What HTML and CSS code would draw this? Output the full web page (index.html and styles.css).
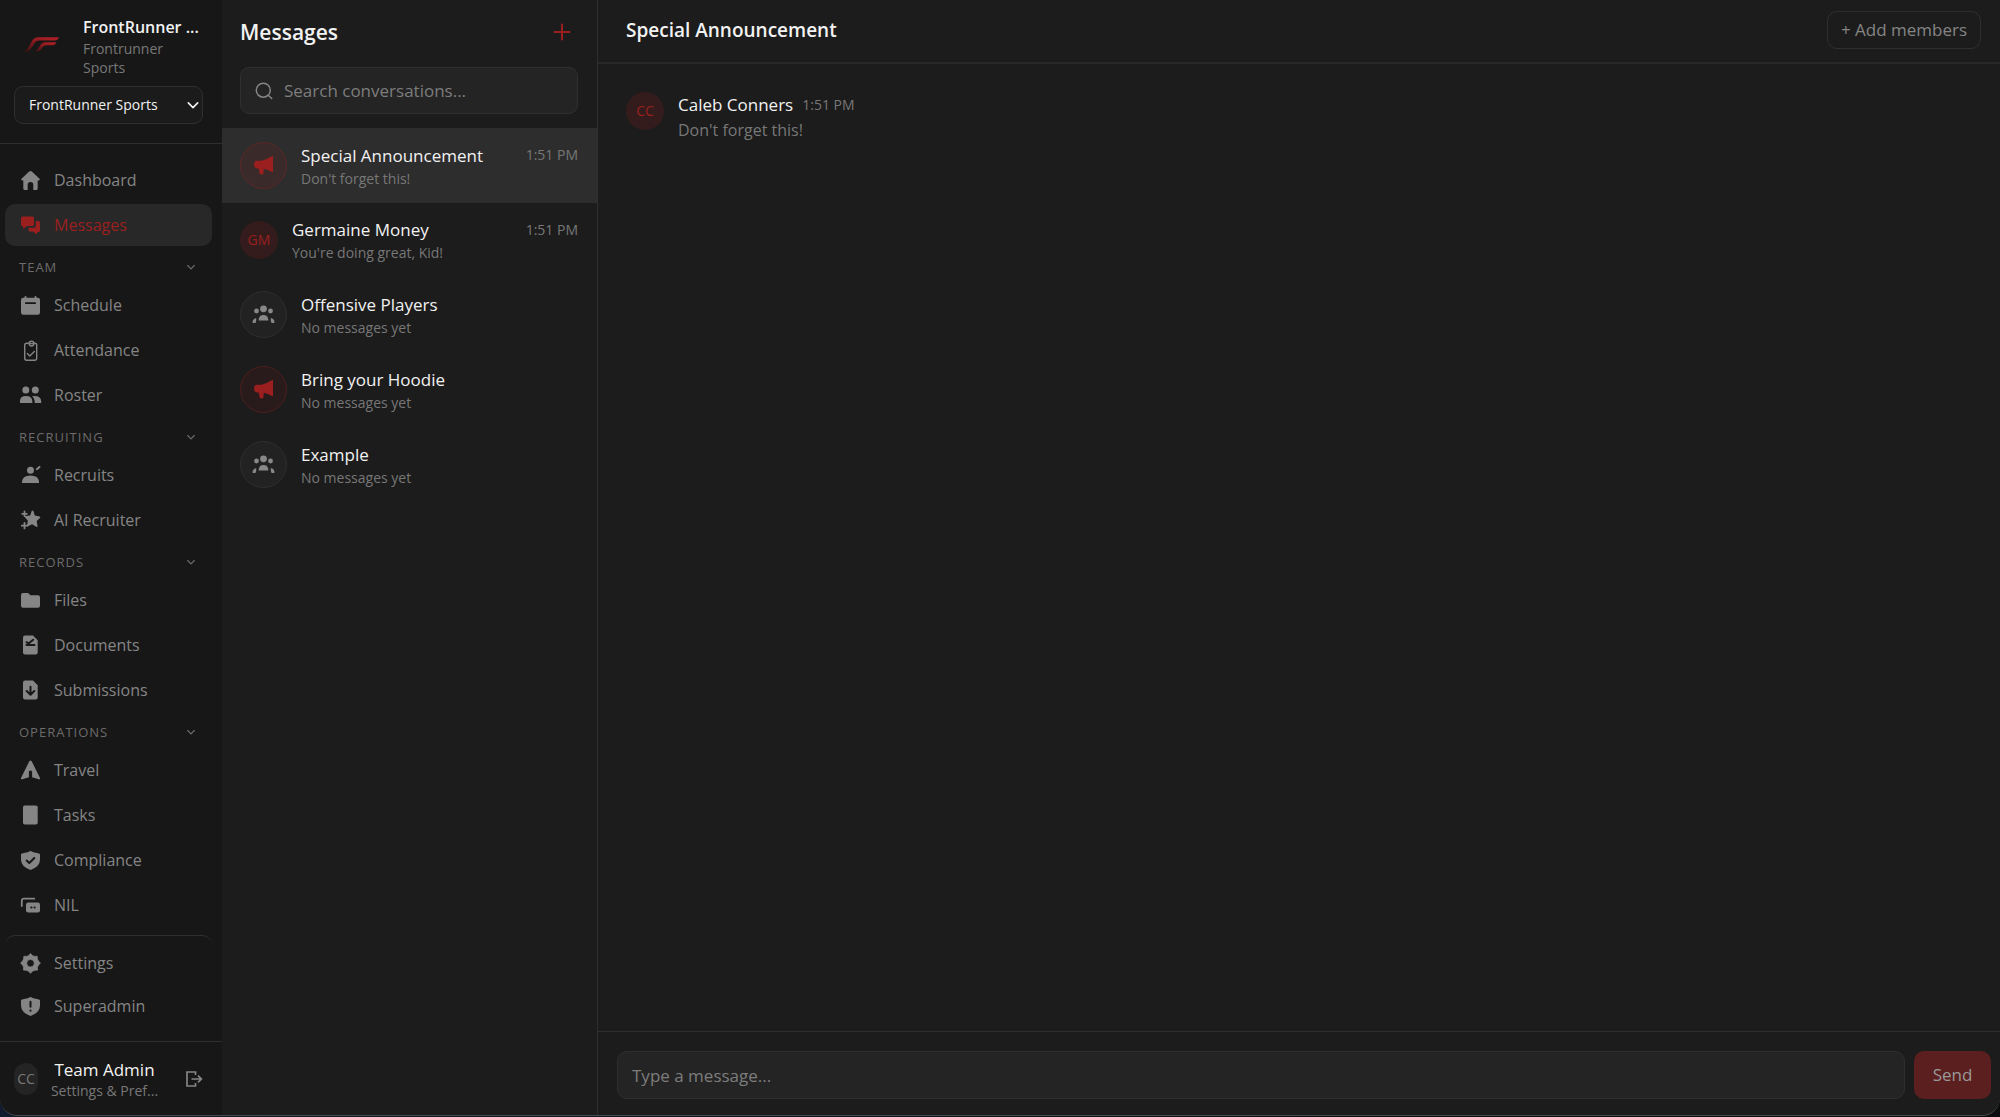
FILE: index.html
```html
<!DOCTYPE html>
<html lang="en">
<head>
<meta charset="utf-8">
<meta name="viewport" content="width=device-width, initial-scale=1">
<title>Messages – FrontRunner Sports</title>
<link rel="stylesheet" href="styles.css">
</head>
<body>
<svg class="sprite" aria-hidden="true">
  <symbol id="home" viewBox="0 0 23 23"><path d="M10.2 2.6 2.7 9.4q-1.4 1.9 1 2H4.3v8.1q0 1.5 1.6 1.5h2.8v-5.2a2.8 2.8 0 0 1 5.6 0V21h2.8q1.6 0 1.6-1.5v-8.1h.6q2.4-.1 1-2l-7.5-6.8q-1.3-1-2.6 0z"/></symbol>
  <symbol id="chat" viewBox="0 0 23 23"><path d="M3.500 2.500H13.500q1.500 0 1.500 1.500v6.500q0 1.500-1.500 1.500H8l-3 2.500q-1 .5-1-.5v-2h-.5Q2 12 2 10.500V4q0-1.500 1.500-1.500z"/><path d="M16.800 7h2.700Q21 7 21 8.500v8q0 1.500-1.500 1.500H18v1.500q0 1-1 .5L14 17.500h-3q-1.500 0-1.500-1.500v-2.300h4.800q2.500 0 2.500-2.500z"/></symbol>
  <symbol id="calendar" viewBox="0 0 23 23"><path fill-rule="evenodd" d="M5.500 3q0-1 1-1t1 1v.8h8V3q0-1 1-1t1 1v.8h1.300Q21 3.800 21 6v12.500q0 2.200-2.200 2.200H4.200Q2 20.700 2 18.500V6q0-2.200 2.200-2.200h1.300zM6.800 8.200a.9.9 0 0 0 0 1.800h9.400a.9.9 0 0 0 0-1.800z"/></symbol>
  <symbol id="clipboard" viewBox="0 0 23 23"><g fill="none" stroke="currentColor" stroke-width="1.400" stroke-linecap="round" stroke-linejoin="round"><path d="M9.500 4.300H7.700q-2 0-2 2v12.900q0 2 2 2h8q2 0 2-2V6.300q0-2-1.800-2h-.5"/><circle cx="12.500" cy="4.600" r="2.400"/><path d="M8.300 14.500l2.500 2.500 4.500-4.500M11.500 4.600h2"/></g></symbol>
  <symbol id="people" viewBox="0 0 23 23"><circle cx="6.800" cy="6" r="3.500"/><circle cx="16.300" cy="6" r="3.500"/><path d="M1 19v-2q0-5 6-5t6.300 5v2zM13 12.200q8.500-1.200 9.200 4.800v2h-6.500v-2q0-3-2.700-4.800z"/></symbol>
  <symbol id="recruit" viewBox="0 0 23 23"><circle cx="11.500" cy="6.200" r="3.500"/><path d="M3 19v-1.500Q3.500 11.500 11.500 11.500T20 17.500V19z"/><path d="M17.800 5.200l2.700-2.300" stroke="currentColor" stroke-width="2" stroke-linecap="round"/></symbol>
  <symbol id="stars" viewBox="0 0 23 23"><path d="M13.500 1.500q.8 0 1 .8l1.300 4.200 4.800.9q1.400.5.4 1.500l-3.300 3.100.8 5q0 1.400-1.200.8l-4.300-2.500-4 2q-1.300.4-1-.9l.9-4.600L6 8.500q-.8-1.100.5-1.500l4.700-.5 1.400-4.200q.2-.8.900-.8z"/><path d="M5.500 2.500v4.600M3.200 4.800h4.600M5.500 14v5.400M2.800 16.700h5.400" stroke="currentColor" stroke-width="1.800" stroke-linecap="round"/></symbol>
  <symbol id="folder" viewBox="0 0 23 23"><path d="M4 4h5l2.500 2.200H19q2 0 2 2v8.600q0 2-2 2H4q-2 0-2-2V6q0-2 2-2z"/></symbol>
  <symbol id="doccheck" viewBox="0 0 23 23"><path d="M6 1.500h8l4.700 4.700v12.300q0 2-2 2H6q-2 0-2-2v-15q0-2 2-2z"/><path d="M7.500 8.200l2 1.300 4.700-3.800M7.500 11h8" class="cut"/></symbol>
  <symbol id="docdown" viewBox="0 0 23 23"><path d="M6 1.500h8l4.700 4.700v12.300q0 2-2 2H6q-2 0-2-2v-15q0-2 2-2z"/><path d="M11.500 7.800v8M7.700 12l3.800 3.900 3.800-3.900" class="cut"/></symbol>
  <symbol id="travel" viewBox="0 0 23 23"><path d="M10.300 2.300q1.200-1.600 2.400 0L21 19q.4 1.700-1.300 1.300l-6.600-2.100V12.500q-1.600-2-3.200 0v5.700l-6.600 2.100Q1.600 20.700 2 19z"/></symbol>
  <symbol id="sheet" viewBox="0 0 23 23"><rect x="4" y="1.500" width="14.700" height="19" rx="1.800"/></symbol>
  <symbol id="shieldcheck" viewBox="0 0 23 23"><path d="M11.500 1.800q1.500 1.700 8.500 2.600 1 .2 1 1.200v4.900q0 7-9.500 10.500Q2 17.500 2 10.500V5.600q0-1 1-1.200 7-.9 8.500-2.600z"/><path d="M7.700 11.500l2.600 2.500 5-5" class="cut"/></symbol>
  <symbol id="cards" viewBox="0 0 23 23"><path d="M2.800 12V6.700q0-2 2-2h10.500" fill="none" stroke="currentColor" stroke-width="1.800" stroke-linecap="round"/><rect x="7" y="8.500" width="14" height="10" rx="2.200"/><path d="M12.300 13.500h.2M15.500 13.500h.2" class="cut"/></symbol>
  <symbol id="gear" viewBox="0 0 23 23"><path fill-rule="evenodd" d="M9.700 3.600 11.500 1.500l1.800 2.100 2.100.8 2.700-.2.300 2.800 1 2 2 2-2 2.200-1 2 .1 2.900-2.900.2-2.200.9-1.900 2.100-1.900-2.100-2.200-.9-2.900-.2.100-2.900-1-2-2-2.200 2-2 1-2 .3-2.800 2.700.2zM11.500 7.400a3.800 3.800 0 1 0 0 7.600 3.800 3.800 0 0 0 0-7.600z" stroke="currentColor" stroke-linejoin="round" stroke-width=".8"/></symbol>
  <symbol id="shieldalert" viewBox="0 0 23 23"><path d="M11.500 1.800q1.500 1.700 8.500 2.600 1 .2 1 1.200v4.900q0 7-9.500 10.500Q2 17.500 2 10.500V5.600q0-1 1-1.200 7-.9 8.500-2.600z"/><path d="M11.500 6.800v5M11.500 15.400v.3" class="cut"/></symbol>
  <symbol id="chevron" viewBox="0 0 12 12"><path d="M2 4.200 6 8.200l4-4" fill="none" stroke="currentColor" stroke-width="1.400" stroke-linecap="round" stroke-linejoin="round"/></symbol>
  <symbol id="logout" viewBox="0 0 18 18"><path d="M10.500 5V2H2v14h8.500v-3M6.500 9H16M13 5.700 16.400 9 13 12.300" fill="none" stroke="currentColor" stroke-width="1.700"/></symbol>
  <symbol id="search" viewBox="0 0 18 18"><g fill="none" stroke="currentColor" stroke-width="1.500" stroke-linecap="round"><circle cx="8.300" cy="8.200" r="7"/><path d="M13.500 13.500l3.200 3"/></g></symbol>
  <symbol id="plus" viewBox="0 0 18 18"><path d="M9 1.500v15M1.500 9h15" stroke="currentColor" stroke-width="2" stroke-linecap="round"/></symbol>
  <symbol id="megaphone" viewBox="0 0 23 23"><path d="M2 9.600Q2.300 6.800 5 6.800h4.500Q14.500 5.500 19.800 2.200q1.200-.6 1.200.6v14.700q0 1.200-1.200.5-3.800-2.300-8-3.300l-.3 4.500q-.2 1.300-1.500 1.300H9.200q-1.300 0-1.600-1.300l-1-4.600q-3.600.1-4.400-2.600z"/></symbol>
  <symbol id="group" viewBox="0 0 23 23"><circle cx="11.500" cy="5.800" r="3.400"/><circle cx="4.500" cy="8" r="2.400"/><circle cx="18.500" cy="8" r="2.400"/><path d="M6.700 17.500v-1.300q.6-4.300 4.800-4.300t4.800 4.300v1.300zM.6 20v-1.300q.3-2.900 3.600-3.600v2.200q0 1.700-.8 2.700zM22.400 20v-1.300q-.3-2.900-3.600-3.600v2.200q0 1.700.8 2.700z"/></symbol>
</svg>

<div class="app">
  <aside class="sidebar">
    <header class="team">
      <div class="team-row">
        <svg class="logo" viewBox="0 0 105 44" role="img" aria-label="FrontRunner">
          <defs><linearGradient id="swoosh" x1="0" y1="1" x2=".5" y2="0"><stop offset="0" stop-color="#3c1214"/><stop offset="1" stop-color="#a91f24"/></linearGradient></defs>
          <path fill="url(#swoosh)" d="M0 43C12 38 17 22 25 9Q31 0 41 0h63q2 1-1 4-3 6-9 6H46q-9 0-13 6L21 35q-6 8-15 8z"/>
          <path fill="url(#swoosh)" d="M32 43c9-4 13-15 19-22q5-6 13-6h33q-2 8-8 9H68q-7 0-11 5l-6 8q-4 6-13 6z"/>
        </svg>
        <div class="team-text">
          <h1 class="team-name">FrontRunner ...</h1>
          <p class="team-org">Frontrunner Sports</p>
        </div>
      </div>
      <div class="team-pick">
        <select class="team-select" aria-label="Team"><option>FrontRunner Sports</option></select>
        <svg class="pick-arrow" aria-hidden="true"><use href="#chevron"/></svg>
      </div>
    </header>

    <nav class="nav" aria-label="Main">
      <a class="nav-item" href="#dashboard"><svg class="icon"><use href="#home"/></svg>Dashboard</a>
      <a class="nav-item active" href="#messages" aria-current="page"><svg class="icon"><use href="#chat"/></svg>Messages</a>
      <button class="nav-head" type="button">TEAM<svg class="chev"><use href="#chevron"/></svg></button>
      <a class="nav-item" href="#schedule"><svg class="icon"><use href="#calendar"/></svg>Schedule</a>
      <a class="nav-item" href="#attendance"><svg class="icon"><use href="#clipboard"/></svg>Attendance</a>
      <a class="nav-item" href="#roster"><svg class="icon"><use href="#people"/></svg>Roster</a>
      <button class="nav-head" type="button">RECRUITING<svg class="chev"><use href="#chevron"/></svg></button>
      <a class="nav-item" href="#recruits"><svg class="icon"><use href="#recruit"/></svg>Recruits</a>
      <a class="nav-item" href="#ai"><svg class="icon"><use href="#stars"/></svg>AI Recruiter</a>
      <button class="nav-head" type="button">RECORDS<svg class="chev"><use href="#chevron"/></svg></button>
      <a class="nav-item" href="#files"><svg class="icon"><use href="#folder"/></svg>Files</a>
      <a class="nav-item" href="#documents"><svg class="icon"><use href="#doccheck"/></svg>Documents</a>
      <a class="nav-item" href="#submissions"><svg class="icon"><use href="#docdown"/></svg>Submissions</a>
      <button class="nav-head" type="button">OPERATIONS<svg class="chev"><use href="#chevron"/></svg></button>
      <a class="nav-item" href="#travel-page"><svg class="icon"><use href="#travel"/></svg>Travel</a>
      <a class="nav-item" href="#tasks"><svg class="icon"><use href="#sheet"/></svg>Tasks</a>
      <a class="nav-item" href="#compliance"><svg class="icon"><use href="#shieldcheck"/></svg>Compliance</a>
      <a class="nav-item" href="#nil"><svg class="icon"><use href="#cards"/></svg>NIL</a>
    </nav>

    <nav class="nav-end" aria-label="Administration">
      <a class="nav-item split" href="#settings"><svg class="icon"><use href="#gear"/></svg>Settings</a>
      <a class="nav-item" href="#superadmin"><svg class="icon"><use href="#shieldalert"/></svg>Superadmin</a>
    </nav>

    <footer class="user">
      <span class="user-avatar">CC</span>
      <button class="user-text" type="button"><span class="user-name">Team Admin</span><span class="user-sub">Settings &amp; Pref...</span></button>
      <button class="logout" type="button" aria-label="Log out"><svg><use href="#logout"/></svg></button>
    </footer>
  </aside>

  <section class="list" aria-label="Conversations">
    <header class="list-head">
      <h2 class="list-title">Messages</h2>
      <button class="new" type="button" aria-label="New conversation"><svg><use href="#plus"/></svg></button>
    </header>
    <label class="search">
      <svg class="search-icon" aria-hidden="true"><use href="#search"/></svg>
      <input type="search" placeholder="Search conversations..." aria-label="Search conversations">
    </label>
    <ul class="rows">
      <li><a class="row selected" href="#c1"><span class="badge red"><svg><use href="#megaphone"/></svg></span><span class="row-text"><span class="row-top"><span class="row-name">Special Announcement</span><time>1:51 PM</time></span><span class="row-sub">Don't forget this!</span></span></a></li>
      <li><a class="row" href="#c2"><span class="initials">GM</span><span class="row-text"><span class="row-top"><span class="row-name">Germaine Money</span><time>1:51 PM</time></span><span class="row-sub">You're doing great, Kid!</span></span></a></li>
      <li><a class="row" href="#c3"><span class="badge"><svg><use href="#group"/></svg></span><span class="row-text"><span class="row-top"><span class="row-name">Offensive Players</span></span><span class="row-sub">No messages yet</span></span></a></li>
      <li><a class="row" href="#c4"><span class="badge red"><svg><use href="#megaphone"/></svg></span><span class="row-text"><span class="row-top"><span class="row-name">Bring your Hoodie</span></span><span class="row-sub">No messages yet</span></span></a></li>
      <li><a class="row" href="#c5"><span class="badge"><svg><use href="#group"/></svg></span><span class="row-text"><span class="row-top"><span class="row-name">Example</span></span><span class="row-sub">No messages yet</span></span></a></li>
    </ul>
  </section>

  <main class="thread">
    <header class="thread-head">
      <h2 class="thread-title">Special Announcement</h2>
      <button class="add" type="button">+ Add members</button>
    </header>
    <div class="messages">
      <article class="message">
        <span class="initials">CC</span>
        <div class="message-body">
          <p class="message-meta"><span class="author">Caleb Conners</span><time>1:51 PM</time></p>
          <p class="message-text">Don't forget this!</p>
        </div>
      </article>
    </div>
    <form class="composer">
      <input class="composer-input" type="text" placeholder="Type a message..." aria-label="Message">
      <button class="send" type="button">Send</button>
    </form>
  </main>
</div>
</body>
</html>
```
FILE: styles.css
```css
:root {
  --side: #171717;
  --bg: #1c1c1c;
  --field: #242424;
  --line: #2f2f2f;
  --muted: #858585;
  --text: #f2f2f2;
  --red: #9b1f1f;
}

* { box-sizing: border-box; }

body {
  margin: 0;
  background: linear-gradient(90deg, #101c2e, #0b0c0e);
  color: var(--text);
  font: 17px/22px "Open Sans", "Noto Sans", sans-serif;
}

h1, h2, p, ul { margin: 0; padding: 0; font-weight: 400; }
ul { list-style: none; }
a { color: inherit; text-decoration: none; }
button, input, select { font: inherit; color: inherit; }
button { padding: 0; border: 0; background: none; cursor: pointer; }
input::placeholder { color: #7d7d7d; opacity: 1; }
svg { flex: none; fill: currentColor; }
.sprite { position: absolute; width: 0; height: 0; }
.cut { fill: none; stroke: var(--side); stroke-width: 2; stroke-linecap: round; stroke-linejoin: round; }

.app {
  display: grid;
  grid-template-columns: 222px 376px 1fr;
  height: calc(100vh - 1px);
  background: var(--bg);
  border-bottom: 1px solid #4a4a4a;
  border-radius: 0 0 18px 18px;
  overflow: hidden;
}

/* Sidebar */
.sidebar { display: flex; flex-direction: column; min-width: 0; background: var(--side); }
.team { padding: 16px 19px 19px 14px; border-bottom: 1px solid var(--line); }
.team-row { display: flex; align-items: flex-start; gap: 24px; padding-left: 10px; }
.logo { width: 35px; height: 15px; margin-top: 21px; }
.team-text { min-width: 0; flex: 1; }
.team-name { font-size: 16px; font-weight: 600; line-height: 23px; white-space: nowrap; }
.team-org { color: #777; font-size: 14px; line-height: 19px; }
.team-pick { position: relative; margin-top: 9px; }
.team-select {
  display: block;
  width: 100%;
  height: 38px;
  padding: 0 14px;
  appearance: none;
  border: 1px solid var(--line);
  border-radius: 9px;
  background: #1b1b1b;
  font-size: 14px;
}
.pick-arrow { position: absolute; right: 3px; top: 12px; width: 14px; height: 14px; pointer-events: none; }

.nav { display: flex; flex-direction: column; gap: 3px; padding: 15px 10px 0 5px; }
.nav-item {
  display: flex;
  align-items: center;
  gap: 12px;
  height: 42px;
  padding-left: 14px;
  border-radius: 10px;
  color: var(--muted);
  font-size: 16px;
}
.nav-item.active { background: #282828; color: var(--red); }
.icon { width: 23px; height: 23px; }
.nav-head {
  display: flex;
  align-items: center;
  justify-content: space-between;
  height: 35px;
  margin-bottom: -3px;
  padding: 0 16px 0 14px;
  color: #6c6c6c;
  font-size: 13px;
  font-weight: 500;
  letter-spacing: 1px;
}
.chev { width: 10px; height: 10px; }
.nav-end { margin-top: auto; padding: 0 10px 14px 5px; }
.nav-item.split { height: 50px; padding-top: 5px; border-top: 1px solid var(--line); }

.user {
  display: flex;
  align-items: center;
  gap: 12px;
  height: 74px;
  padding: 0 19px 0 14px;
  border-top: 1px solid var(--line);
}
.user-avatar {
  display: grid;
  place-items: center;
  width: 24px;
  height: 32px;
  border-radius: 12px;
  background: #242424;
  color: #777;
  font-size: 14px;
}
.user-text { flex: 1; min-width: 0; text-align: center; }
.user-text span { display: block; white-space: nowrap; }
.user-name { font-weight: 500; line-height: 23px; }
.user-sub { color: #777; font-size: 14px; line-height: 19px; }
.logout { display: grid; margin-left: 14px; color: var(--muted); }
.logout svg { width: 18px; height: 18px; }

/* Conversation list */
.list { min-width: 0; border-right: 1px solid var(--line); }
.list-head { display: flex; align-items: center; justify-content: space-between; padding: 16px 26px 19px 18px; }
.list-title { font-size: 21px; font-weight: 600; line-height: 32px; }
.new { display: grid; color: var(--red); }
.new svg { width: 18px; height: 18px; }
.search {
  display: flex;
  align-items: center;
  gap: 11px;
  height: 47px;
  margin: 0 19px 14px 18px;
  padding: 0 14px;
  border: 1px solid var(--line);
  border-radius: 9px;
  background: var(--field);
}
.search-icon { width: 18px; height: 18px; color: var(--muted); }
.search input { flex: 1; min-width: 0; padding: 0; border: 0; outline: 0; background: none; }
.row { display: flex; align-items: center; gap: 14px; padding: 14px 19px 14px 18px; }
.row.selected { background: #2d2d2d; }
.badge, .initials { display: grid; flex: none; place-items: center; border-radius: 50%; }
.badge { width: 47px; height: 47px; border: 1px solid #2f2f2f; background: #222; color: #888; }
.badge.red { border-color: #4f1e1e; background: #291b1b; color: var(--red); }
.selected .badge.red { border-color: #5d2727; background: #3a2a2a; }
.badge svg { width: 23px; height: 23px; }
.initials { width: 38px; height: 38px; background: #351c1c; color: var(--red); font-size: 14px; }
.row-text { flex: 1; min-width: 0; }
.row-top { display: flex; align-items: center; justify-content: space-between; }
.row-name { font-weight: 500; line-height: 25px; }
time { color: #777; font-size: 14px; }
.row-sub { display: block; color: #777; font-size: 14px; line-height: 21px; }

/* Thread */
.thread { display: flex; flex-direction: column; min-width: 0; }
.thread-head {
  display: flex;
  align-items: center;
  justify-content: space-between;
  height: 64px;
  padding: 0 19px 3px 28px;
  border-bottom: 2px solid #282828;
}
.thread-title { font-size: 19px; font-weight: 600; }
.add {
  height: 38px;
  padding: 0 13px;
  border: 1px solid var(--line);
  border-radius: 10px;
  color: var(--muted);
}
.messages { flex: 1; padding: 28px; }
.message { display: flex; align-items: flex-start; gap: 14px; }
.message-meta { display: flex; align-items: center; gap: 9px; line-height: 25px; }
.message-text { color: #777; font-size: 16px; line-height: 26px; }
.author { font-weight: 500; }
.composer { display: flex; gap: 9px; padding: 19px 9px 16px 19px; border-top: 1px solid var(--line); }
.composer-input {
  flex: 1;
  min-width: 0;
  height: 48px;
  padding: 0 14px;
  border: 1px solid var(--line);
  border-radius: 10px;
  background: var(--field);
}
.send { width: 77px; border-radius: 10px; background: #5c1f1f; color: #999; font-weight: 500; }
```
